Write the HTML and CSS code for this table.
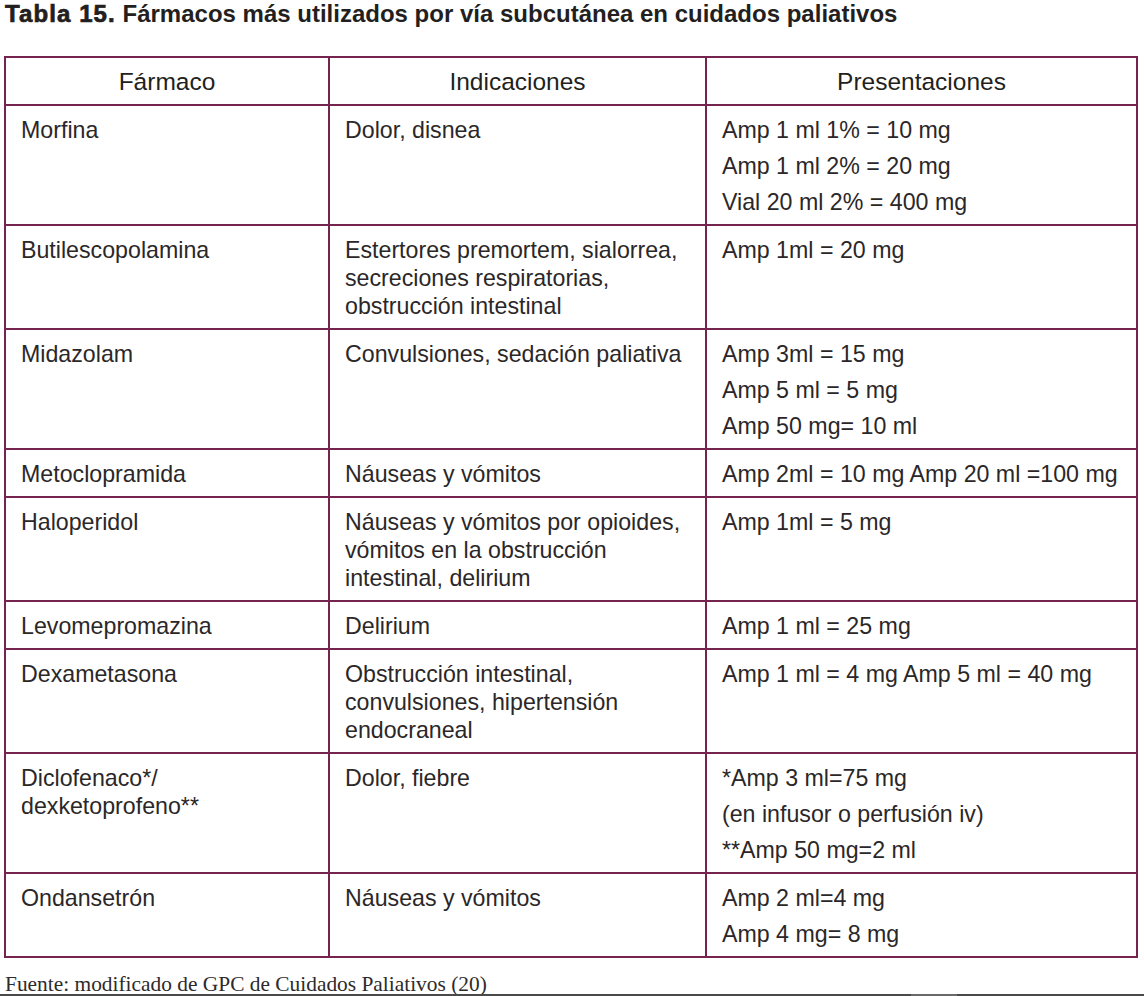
FILE: index.html
```html
<!DOCTYPE html>
<html lang="es">
<head>
<meta charset="utf-8">
<title>Tabla 15</title>
<link rel="stylesheet" href="styles.css">
</head>
<body>
<div class="page">
  <h1 class="title"><span class="title-num">Tabla 15.</span> Fármacos más utilizados por vía subcutánea en cuidados paliativos</h1>
  <table class="drugs">
    <colgroup>
      <col class="c1">
      <col class="c2">
      <col class="c3">
    </colgroup>
    <thead>
      <tr><th>Fármaco</th><th>Indicaciones</th><th>Presentaciones</th></tr>
    </thead>
    <tbody>
      <tr>
        <td>Morfina</td>
        <td>Dolor, disnea</td>
        <td><p>Amp 1 ml 1% = 10 mg</p><p>Amp 1 ml 2% = 20 mg</p><p>Vial 20 ml 2% = 400 mg</p></td>
      </tr>
      <tr>
        <td>Butilescopolamina</td>
        <td>Estertores premortem, sialorrea,<br>secreciones respiratorias,<br>obstrucción intestinal</td>
        <td><p>Amp 1ml = 20 mg</p></td>
      </tr>
      <tr>
        <td>Midazolam</td>
        <td>Convulsiones, sedación paliativa</td>
        <td><p>Amp 3ml = 15 mg</p><p>Amp 5 ml = 5 mg</p><p>Amp 50 mg= 10 ml</p></td>
      </tr>
      <tr>
        <td>Metoclopramida</td>
        <td>Náuseas y vómitos</td>
        <td><p class="nowrap">Amp 2ml = 10 mg Amp 20 ml =100 mg</p></td>
      </tr>
      <tr>
        <td>Haloperidol</td>
        <td>Náuseas y vómitos por opioides,<br>vómitos en la obstrucción<br>intestinal, delirium</td>
        <td><p>Amp 1ml = 5 mg</p></td>
      </tr>
      <tr>
        <td>Levomepromazina</td>
        <td>Delirium</td>
        <td><p>Amp 1 ml = 25 mg</p></td>
      </tr>
      <tr>
        <td>Dexametasona</td>
        <td>Obstrucción intestinal,<br>convulsiones, hipertensión<br>endocraneal</td>
        <td><p class="nowrap">Amp 1 ml = 4 mg Amp 5 ml = 40 mg</p></td>
      </tr>
      <tr>
        <td>Diclofenaco*/<br>dexketoprofeno**</td>
        <td>Dolor, fiebre</td>
        <td><p>*Amp 3 ml=75 mg</p><p>(en infusor o perfusión iv)</p><p>**Amp 50 mg=2 ml</p></td>
      </tr>
      <tr>
        <td>Ondansetrón</td>
        <td>Náuseas y vómitos</td>
        <td><p>Amp 2 ml=4 mg</p><p>Amp 4 mg= 8 mg</p></td>
      </tr>
    </tbody>
  </table>
  <p class="source">Fuente: modificado de GPC de Cuidados Paliativos (20)</p>
</div>
<div class="scan-edge"><span class="scan-light"></span></div>
</body>
</html>
```

FILE: styles.css
```css
html, body {
  margin: 0;
  padding: 0;
  background: #ffffff;
}

body {
  width: 1144px;
  height: 996px;
  overflow: hidden;
  color: #2b2728;
  font-family: "Liberation Sans", Arial, sans-serif;
}

.page {
  padding: 0 0 0 4px;
}

.title {
  margin: 0;
  padding-left: 1px;
  font-size: 24px;
  line-height: 28px;
  font-weight: bold;
  color: #231f20;
  white-space: nowrap;
}

.title-num {
  letter-spacing: 1.1px;
  -webkit-text-stroke: 0.7px #231f20;
}

.drugs {
  margin-top: 28px;
  border-collapse: collapse;
  width: 1132px;
  table-layout: fixed;
  font-size: 23.2px;
  line-height: 28px;
}

.c1 { width: 324px; }
.c2 { width: 377px; }
.c3 { width: 431px; }

.drugs th,
.drugs td {
  border: 2px solid #74244f;
  padding: 10px 10px 8px 15px;
  vertical-align: top;
  text-align: left;
  font-weight: normal;
  color: #2b2728;
}

.drugs th {
  text-align: center;
  padding-left: 10px;
  font-size: 24.5px;
  color: #231f20;
}

.drugs td p {
  margin: 0;
}

.drugs td p + p {
  margin-top: 8px;
}

.nowrap {
  white-space: nowrap;
}

.source {
  margin: 16px 0 0;
  padding-left: 1px;
  font-family: "Liberation Serif", "Times New Roman", serif;
  font-size: 21.4px;
  line-height: 21px;
  color: #2e2a2b;
}

.scan-edge {
  position: fixed;
  left: 0;
  right: 0;
  bottom: 0;
  height: 2px;
  background: #4a4a4a;
}

.scan-light {
  position: absolute;
  left: 911px;
  width: 46px;
  top: 0;
  bottom: 0;
  background: #6a6a6a;
}
```
